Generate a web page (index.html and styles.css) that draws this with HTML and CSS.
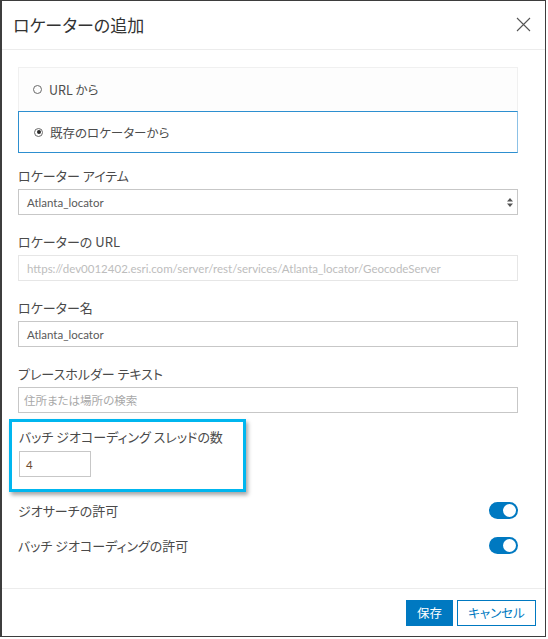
FILE: index.html
```html
<!DOCTYPE html>
<html lang="ja">
<head>
<meta charset="utf-8">
<title>ロケーターの追加</title>
<link rel="stylesheet" href="styles.css">
</head>
<body>
<div class="dialog">
  <header class="dialog-header">
    <h1 class="dialog-title">ロケーターの追加</h1>
    <button class="close-btn" aria-label="閉じる">
      <svg width="15" height="15" viewBox="0 0 15 15"><path d="M1 1L14 14M14 1L1 14" stroke="#555" stroke-width="1.1" fill="none"/></svg>
    </button>
  </header>

  <main class="dialog-body">
    <div class="radio-card">
      <label class="radio-option">
        <span class="radio"></span>
        <span>URL から</span>
      </label>
      <label class="radio-option selected">
        <span class="radio checked"></span>
        <span>既存のロケーターから</span>
      </label>
    </div>

    <div class="field first">
      <div class="field-label">ロケーター アイテム</div>
      <div class="select">
        <span>Atlanta_locator</span>
        <svg class="select-arrows" width="6" height="9" viewBox="0 0 6 9"><path d="M3 0L6 3.5H0Z M3 9L0 5.5H6Z" fill="#555"/></svg>
      </div>
    </div>

    <div class="field">
      <div class="field-label">ロケーターの URL</div>
      <div class="input disabled">https://dev0012402.esri.com/server/rest/services/Atlanta_locator/GeocodeServer</div>
    </div>

    <div class="field">
      <div class="field-label">ロケーター名</div>
      <div class="input">Atlanta_locator</div>
    </div>

    <div class="field">
      <div class="field-label">プレースホルダー テキスト</div>
      <div class="input placeholder">住所または場所の検索</div>
    </div>

    <div class="highlight">
      <div class="field-label">バッチ ジオコーディング スレッドの数</div>
      <div class="input small">4</div>
    </div>

    <div class="toggle-row">
      <span class="toggle-label">ジオサーチの許可</span>
      <span class="toggle on"></span>
    </div>
    <div class="toggle-row">
      <span class="toggle-label">バッチ ジオコーディングの許可</span>
      <span class="toggle on"></span>
    </div>
  </main>

  <footer class="dialog-footer">
    <button class="btn btn-primary">保存</button>
    <button class="btn btn-secondary">キャンセル</button>
  </footer>
</div>
</body>
</html>
```

FILE: styles.css
```css
* { box-sizing: border-box; }

html, body {
  margin: 0;
  padding: 0;
  background: #fff;
}

body {
  font-family: "Noto Sans CJK JP", "Lato", "Noto Sans", sans-serif;
  font-feature-settings: "palt";
  color: #4c4c4c;
}

.dialog {
  width: 546px;
  height: 637px;
  border: 1px solid #3d3d3d;
  border-left-width: 2px;
  display: flex;
  flex-direction: column;
  background: #fff;
}

.dialog-header {
  height: 49px;
  flex: none;
  display: flex;
  align-items: center;
  justify-content: space-between;
  padding: 0 14px 2px 11px;
  border-bottom: 1px solid #ececec;
}

.dialog-title {
  margin: 0;
  font-size: 17px;
  font-weight: normal;
  color: #323232;
}

.close-btn {
  border: 0;
  background: none;
  padding: 0;
  width: 16px;
  height: 16px;
  display: flex;
  align-items: center;
  justify-content: center;
}

.dialog-body {
  flex: 1;
  padding: 17px 27px 0 16px;
}

.radio-card {
  border: 1px solid #f0f0f0;
  border-bottom: 0;
  background: #fdfdfd;
}

.radio-option {
  height: 43px;
  display: flex;
  align-items: center;
  gap: 7px;
  padding-left: 14px;
  font-size: 12.5px;
  color: #4c4c4c;
}

.radio-option.selected {
  height: 42px;
  margin: 0 -1px;
  padding-left: 15px;
  border: 1px solid #2d8fd0;
  border-right-color: #8cc1e6;
  background: #fff;
}

.radio {
  width: 9px;
  height: 9px;
  border: 1px solid #6a6a6a;
  border-radius: 50%;
  position: relative;
}

.radio.checked::after {
  content: "";
  position: absolute;
  left: 1.5px;
  top: 1.5px;
  width: 4px;
  height: 4px;
  border-radius: 50%;
  background: #2a2a2a;
}

.field {
  margin-top: 18px;
}

.field.first {
  margin-top: 14px;
}

.field-label {
  font-size: 13px;
  line-height: 18px;
  color: #4a4a4a;
  margin-bottom: 4px;
}

.select,
.input {
  height: 26px;
  border: 1px solid #c7c7c7;
  display: flex;
  align-items: center;
  padding: 0 8px;
  font-size: 11.5px;
  color: #595959;
  font-family: "Lato", "Noto Sans CJK JP", sans-serif;
  background: #fff;
}

.select {
  justify-content: space-between;
  padding-right: 4px;
}

.select-arrows {
  margin-top: 1px;
}

.input.disabled {
  border-color: #e6e6e6;
  color: #bdbdbd;
}

.input.placeholder {
  color: #a8a8a8;
  font-family: "Noto Sans CJK JP", sans-serif;
  padding-left: 5px;
}

.highlight {
  margin: 6px 0 0 -9px;
  width: 237px;
  height: 73px;
  border: 3px solid #00b6ef;
  padding: 6px 0 0 7px;
  box-shadow: 2px 3px 4px rgba(0, 0, 0, 0.35);
}

.highlight .field-label {
  margin-bottom: 5px;
}

.input.small {
  width: 72px;
  height: 26px;
  padding-left: 6px;
  color: #6a4a30;
}

.toggle-row {
  display: flex;
  align-items: center;
  justify-content: space-between;
  height: 35px;
  font-size: 13px;
  color: #4a4a4a;
}

.highlight + .toggle-row {
  margin-top: 1px;
}

.toggle {
  width: 29px;
  height: 17px;
  border-radius: 9px;
  background: #0079c1;
  position: relative;
}

.toggle::after {
  content: "";
  position: absolute;
  right: 2px;
  top: 2px;
  width: 13px;
  height: 13px;
  border-radius: 50%;
  background: #fff;
}

.dialog-footer {
  flex: none;
  height: 48px;
  border-top: 1px solid #ececec;
  display: flex;
  justify-content: flex-end;
  align-items: center;
  gap: 4px;
  padding: 0 9px 0 0;
}

.btn {
  height: 26px;
  font-family: "Noto Sans CJK JP", sans-serif;
  font-feature-settings: "palt";
  font-size: 12.5px;
  padding: 0;
  border: 1px solid #0079c1;
  white-space: nowrap;
  cursor: pointer;
}

.btn-primary {
  width: 47px;
  background: #0079c1;
  color: #fff;
}

.btn-secondary {
  width: 79px;
  background: #fff;
  color: #0079c1;
}
```
